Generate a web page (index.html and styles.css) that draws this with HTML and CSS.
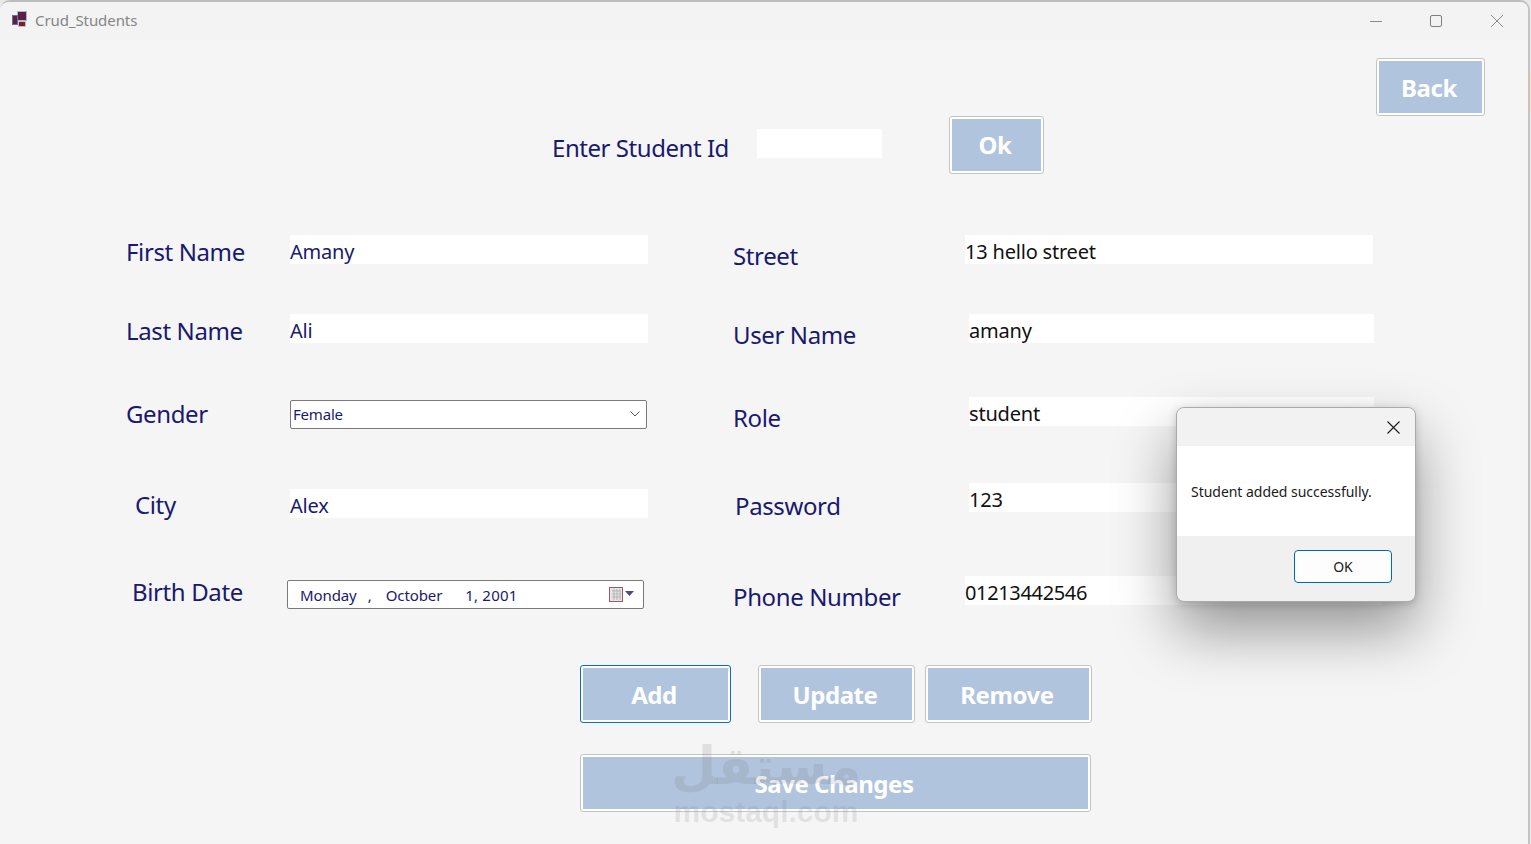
FILE: index.html
```html
<!DOCTYPE html>
<html lang="en">
<head>
<meta charset="utf-8">
<title>Crud_Students</title>
<link rel="stylesheet" href="styles.css">
</head>
<body>
<div class="window">
  <header class="titlebar">
    <svg class="app-icon" width="16" height="16" viewBox="0 0 16 16">
      <rect x="6.5" y="0.5" width="9" height="9" fill="#5b2048" stroke="#b9b4c4"/>
      <rect x="1.5" y="4.5" width="5" height="9" fill="#5b2048" stroke="#6d6a9c"/>
      <rect x="7.5" y="10.5" width="7" height="5" fill="#6b2338" stroke="#c4bfc4"/>
    </svg>
    <span class="app-title">Crud_Students</span>
    <div class="caption-buttons">
      <svg width="12" height="12" viewBox="0 0 12 12"><path d="M0 6.5h12" stroke="#8a8a8a" fill="none"/></svg>
      <svg width="12" height="12" viewBox="0 0 12 12"><rect x="0.5" y="0.5" width="11" height="11" rx="1.5" stroke="#7f7f7f" fill="none"/></svg>
      <svg width="14" height="14" viewBox="0 0 14 14"><path d="M1 1l12 12M13 1L1 13" stroke="#8a8a8a" fill="none"/></svg>
    </div>
  </header>

  <main class="client">
    <div class="back-row"><button class="btn btn-back">Back</button></div>

    <div class="id-row">
      <span class="label id-label">Enter Student Id</span>
      <div class="field id-field"></div>
      <button class="btn btn-ok">Ok</button>
    </div>

    <div class="form">
      <section class="col col-left">
        <div class="row"><span class="label label-w off-2">First Name</span><div class="field field-left">Amany</div></div>
        <div class="row r-last"><span class="label label-w off-2">Last Name</span><div class="field field-left">Ali</div></div>
        <div class="row r-gender"><span class="label label-w up-1">Gender</span>
          <div class="combo">Female
            <svg class="chevron" width="10" height="6" viewBox="0 0 10 6"><path d="M0.5 0.5L5 5l4.5-4.5" stroke="#555" fill="none"/></svg>
          </div>
        </div>
        <div class="row r-city"><span class="label label-w off-1 ind-9">City</span><div class="field field-left">Alex</div></div>
        <div class="row r-birth"><span class="label label-w up-3 ind-6">Birth Date</span>
          <div class="date">
            <span class="d-day">Monday</span><span class="d-comma">,</span><span class="d-month">October</span><span class="d-year">1, 2001</span>
            <svg class="cal" width="26" height="16" viewBox="0 0 26 16">
              <rect x="0.5" y="0.5" width="13" height="14" fill="#e6e6e6" stroke="#a0566e"/>
              <path d="M3 4h9M3 7h9M3 10h9M5 2v11M8 2v11M11 2v11" stroke="#b5b5b5" fill="none"/>
              <path d="M16 4h9l-4.5 5z" fill="#4b4a82"/>
            </svg>
          </div>
        </div>
      </section>

      <section class="col col-right">
        <div class="row"><span class="label rlabel rlabel-street">Street</span><div class="field field-right w-408">13 hello street</div></div>
        <div class="row r-user"><span class="label rlabel">User Name</span><div class="field field-right w-405">amany</div></div>
        <div class="row r-role"><span class="label rlabel">Role</span><div class="field field-right w-405">student</div></div>
        <div class="row r-pass"><span class="label rlabel rlabel-pass">Password</span><div class="field field-right w-405">123</div></div>
        <div class="row r-phone"><span class="label rlabel rlabel-street">Phone Number</span><div class="field field-right w-417">01213442546</div></div>
      </section>
    </div>

    <div class="actions">
      <button class="btn btn-add">Add</button>
      <button class="btn btn-update">Update</button>
      <button class="btn btn-remove">Remove</button>
    </div>
    <button class="btn btn-save">Save Changes</button>
  </main>

  <div class="watermark" aria-hidden="true">
    <span class="wm-ar" lang="ar" dir="rtl">مستقل</span>
    <span class="wm-en">mostaql.com</span>
  </div>

  <div class="dialog">
    <div class="dialog-head">
      <svg width="13" height="13" viewBox="0 0 13 13"><path d="M0.5 0.5l12 12M12.5 0.5l-12 12" stroke="#1a1a1a" stroke-width="1.1" fill="none"/></svg>
    </div>
    <div class="dialog-body">Student added successfully.</div>
    <div class="dialog-foot"><button class="dialog-ok">OK</button></div>
  </div>
</div>
</body>
</html>
```
FILE: styles.css
```css
* { box-sizing: border-box; }
html, body { margin: 0; height: 100%; overflow: hidden; }
body {
  width: 1531px;
  height: 844px;
  background: linear-gradient(to bottom, #e9e9e9 72px, #fbe3c4 72px, #fbe3c4 112px, #ececec 112px);
  font-family: "Noto Sans", "Open Sans", sans-serif;
}
.window {
  position: relative;
  width: 1530px;
  height: 844px;
  border-top: 2px solid #bdbdbd;
  border-right: 2px solid #c4c4c4;
  border-radius: 10px 10px 0 0;
  background: #f5f5f5;
  overflow: hidden;
}
.titlebar {
  height: 38px;
  background: #f3f3f3;
  display: flex;
  align-items: center;
  padding-left: 11px;
}
.app-icon { flex: none; margin-top: -4px; }
.app-title { margin: -2px 0 0 8px; font-size: 15px; letter-spacing: -0.08px; color: #858585; }
.caption-buttons { margin-left: auto; display: flex; align-items: center; gap: 48px; padding-right: 24px; }

.client { display: block; }
.back-row { display: flex; justify-content: flex-end; padding: 18px 44px 0 0; height: 76px; }

.btn {
  display: block;
  padding: 0 3px 0 0;
  font-family: "Noto Sans", "Open Sans", sans-serif;
  font-weight: 700;
  font-size: 24px;
  letter-spacing: -0.45px;
  color: #fff;
  background: #b0c4de;
  border: 2px solid #fff;
  outline: 1px solid #c4c4c4;
  outline-offset: 0;
  border-radius: 2px;
}
.btn-back { width: 107px; height: 56px; margin-top: 1px; }
.id-row { display: flex; align-items: flex-start; height: 58px; padding-left: 552px; }
.btn-ok { width: 93px; height: 56px; margin: 1px 0 0 68px; padding-bottom: 2px; }

.label { font-size: 24px; line-height: 29px; color: #191970; letter-spacing: -0.38px; white-space: nowrap; }
.id-label { width: 205px; padding-top: 17px; letter-spacing: -0.45px; }
.field { height: 29px; padding-top: 2px; background: #fff; font-size: 20px; line-height: 29px; letter-spacing: -0.2px; white-space: nowrap; }
.id-field { width: 125px; margin-top: 13px; }

.form { display: flex; align-items: flex-start; padding: 61px 0 0 126px; height: 492px; }
.col-left { width: 607px; }
.row { display: flex; align-items: flex-start; height: 29px; }
.r-last { margin-top: 50px; }
.r-gender { margin-top: 57px; }
.r-city { margin-top: 60px; }
.r-birth { margin-top: 62px; }
.r-user { margin-top: 50px; }
.r-role { margin-top: 54px; }
.r-pass { margin-top: 57px; }
.r-phone { margin-top: 64px; }

.label-w { width: 164px; }
.off-2 { padding-top: 2px; }
.off-1 { padding-top: 1px; }
.up-1 { margin-top: -1px; }
.up-3 { margin-top: -3px; }
.ind-9 { padding-left: 9px; }
.ind-6 { padding-left: 6px; }

.field-left { width: 358px; color: #191970; }
.combo {
  position: relative;
  width: 357px;
  height: 29px;
  background: #fff;
  border: 1px solid #7a7a7a;
  border-radius: 2px;
  padding-left: 2px;
  font-size: 15px;
  line-height: 26px;
  letter-spacing: -0.2px;
  color: #191970;
}
.chevron { position: absolute; right: 6px; top: 10px; }
.date {
  display: flex;
  align-items: center;
  width: 357px;
  height: 29px;
  margin-left: -3px;
  background: #fff;
  border: 1px solid #7a7a7a;
  border-radius: 2px;
  padding-left: 12px;
  font-size: 15px;
  color: #191970;
}
.d-day { letter-spacing: -0.1px; }
.d-comma { margin-left: 11px; }
.d-month { margin-left: 14px; letter-spacing: -0.1px; }
.d-year { margin-left: 23px; letter-spacing: 0.2px; }
.cal { margin-left: auto; margin-right: 8px; }

.rlabel { width: 236px; padding-top: 6px; }
.rlabel-street { width: 232px; }
.rlabel-pass { padding: 8px 0 0 2px; }
.field-right { color: #111; }
.w-408 { width: 408px; }
.w-405 { width: 405px; }
.w-417 { width: 417px; letter-spacing: -0.35px; }

.actions { display: flex; padding-left: 581px; }
.btn-add { width: 149px; height: 56px; outline-color: #0a6cc9; }
.btn-update { width: 155px; height: 56px; margin-left: 29px; }
.btn-remove { width: 165px; height: 56px; margin-left: 12px; }
.btn-save { width: 509px; height: 56px; margin: 33px 0 0 581px; }

.watermark {
  position: absolute;
  left: 672px;
  top: 731px;
  width: 188px;
  display: flex;
  flex-direction: column;
  align-items: center;
  color: rgba(120, 120, 120, 0.17);
  font-weight: 700;
  pointer-events: none;
}
.wm-ar { font-family: "DejaVu Sans", sans-serif; font-size: 52px; line-height: 66px; }
.wm-en { margin-top: -3px; font-family: "Liberation Sans", sans-serif; font-size: 30px; line-height: 32px; }

.dialog {
  position: absolute;
  left: 1176px;
  top: 405px;
  width: 240px;
  height: 195px;
  border: 1px solid #ababab;
  border-radius: 8px;
  background: #f0f0f0;
  box-shadow: 0 28px 60px rgba(0, 0, 0, 0.4), 0 2px 8px rgba(0, 0, 0, 0.18);
}
.dialog-head { height: 38px; background: #f2f2f2; display: flex; align-items: center; justify-content: flex-end; padding-right: 15px; border-radius: 8px 8px 0 0; }
.dialog-body { height: 90px; background: #fff; padding: 36px 0 0 14px; font-size: 14px; line-height: 20px; letter-spacing: -0.03px; color: #1a1a1a; white-space: nowrap; }
.dialog-foot { display: flex; justify-content: flex-end; padding: 14px 23px 0 0; }
.dialog-ok {
  width: 98px;
  height: 33px;
  background: #fdfdfd;
  border: 1px solid #0067c0;
  border-radius: 4px;
  font-family: "Noto Sans", sans-serif;
  font-size: 14px;
  color: #1a1a1a;
  padding: 0;
}
```
